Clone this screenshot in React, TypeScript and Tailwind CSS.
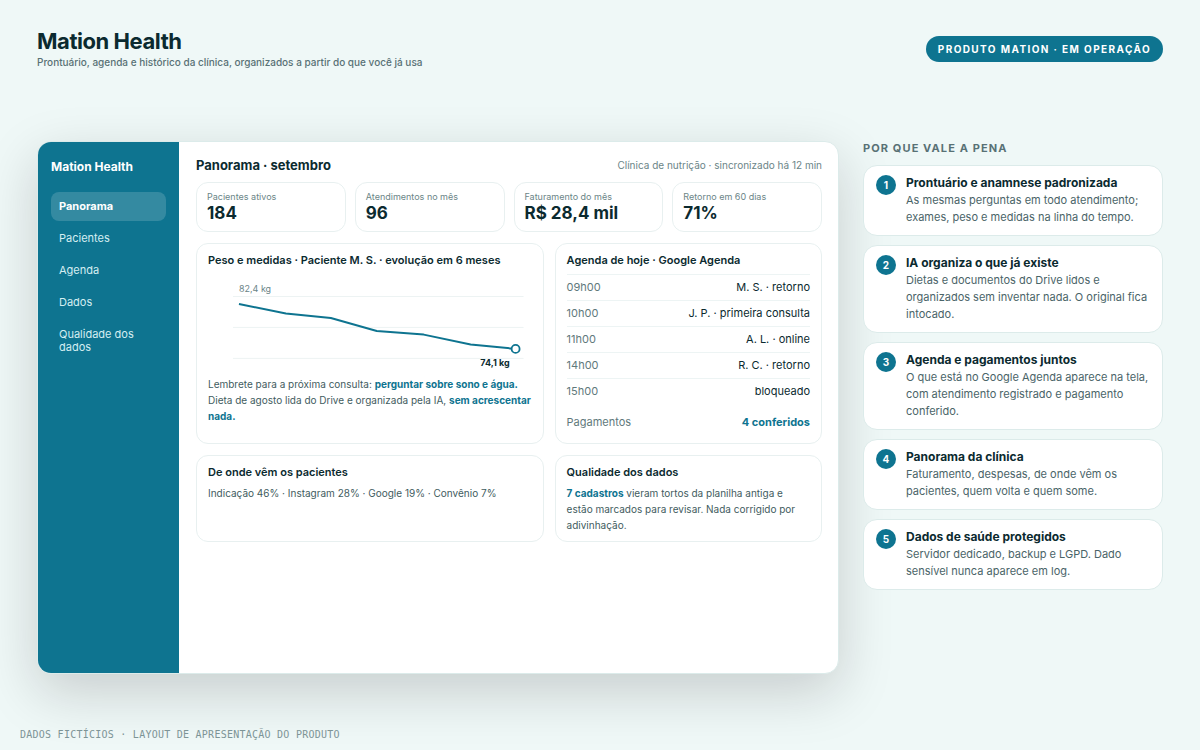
import React from 'react';

const NAV_ITEMS = ['Panorama', 'Pacientes', 'Agenda', 'Dados', 'Qualidade dos dados'];

const STATS = [
    { label: 'Pacientes ativos', value: '184' },
    { label: 'Atendimentos no mês', value: '96' },
    { label: 'Faturamento do mês', value: 'R$ 28,4 mil' },
    { label: 'Retorno em 60 dias', value: '71%' },
];

const AGENDA = [
    { time: '09h00', detail: 'M. S. · retorno' },
    { time: '10h00', detail: 'J. P. · primeira consulta' },
    { time: '11h00', detail: 'A. L. · online' },
    { time: '14h00', detail: 'R. C. · retorno' },
    { time: '15h00', detail: 'bloqueado' },
];

const BENEFITS = [
    { title: 'Prontuário e anamnese padronizada', text: 'As mesmas perguntas em todo atendimento; exames, peso e medidas na linha do tempo.' },
    { title: 'IA organiza o que já existe', text: 'Dietas e documentos do Drive lidos e organizados sem inventar nada. O original fica intocado.' },
    { title: 'Agenda e pagamentos juntos', text: 'O que está no Google Agenda aparece na tela, com atendimento registrado e pagamento conferido.' },
    { title: 'Panorama da clínica', text: 'Faturamento, despesas, de onde vêm os pacientes, quem volta e quem some.' },
    { title: 'Dados de saúde protegidos', text: 'Servidor dedicado, backup e LGPD. Dado sensível nunca aparece em log.' },
];

const Panel: React.FC<{ title: string; children: React.ReactNode }> = ({ title, children }) => (
    <section className="rounded-xl border border-[#e8f0f0] px-[11px] py-2">
        <h3 className="text-[11px] leading-4 font-semibold">{title}</h3>
        {children}
    </section>
);

const WeightChart: React.FC = () => (
    <svg className="mt-1 w-full" viewBox="0 0 324 104" role="img" aria-label="Evolução do peso em 6 meses">
        <g stroke="#edf3f3" strokeWidth="1">
            <path d="M25 24.5H316" />
            <path d="M25 55.5H316" />
            <path d="M25 86.5H316" />
        </g>
        <polyline
            points="31,32 78,41.5 123,46 169,59 216,62.7 263,72.5 308,77"
            fill="none"
            stroke="#0e7490"
            strokeWidth="2"
            strokeLinejoin="round"
        />
        <circle cx="308" cy="77" r="4" fill="#fff" stroke="#0e7490" strokeWidth="1.8" />
        <text x="31" y="20" fontSize="9" fill="#6b8587">82,4 kg</text>
        <text x="302" y="94" fontSize="9" fontWeight="700" fill="#0b2a2f" textAnchor="end">74,1 kg</text>
    </svg>
);

const App: React.FC = () => {
    return (
        <div className="min-h-screen flex flex-col bg-[#eff8f7] text-[#0b2a2f] font-['Inter',sans-serif]">
            <header className="flex items-center justify-between px-[37px] pt-7">
                <div>
                    <h1 className="text-[22px] leading-[26px] font-bold tracking-[-0.02em]">Mation Health</h1>
                    <p className="mt-px text-[10px] leading-[15px] font-medium text-[#587175]">
                        Prontuário, agenda e histórico da clínica, organizados a partir do que você já usa
                    </p>
                </div>
                <span className="rounded-full bg-[#0e7490] px-3 py-[5px] text-[10px] leading-4 font-bold tracking-[0.14em] text-white">
                    PRODUTO MATION · EM OPERAÇÃO
                </span>
            </header>

            <main className="mt-[71px] flex flex-1 gap-6 px-[37px]">
                <div className="flex min-w-0 flex-1 overflow-hidden rounded-[14px] border border-[#dcebea] bg-white shadow-[0_18px_54px_rgba(20,15,20,0.18)]">
                    <aside className="w-[141px] shrink-0 bg-[#0e7490] px-[13px] pt-4 text-white">
                        <div className="text-xs leading-[18px] font-bold">Mation Health</div>
                        <nav className="mt-4 flex flex-col gap-[3px]">
                            {NAV_ITEMS.map((item, i) => (
                                <a
                                    key={item}
                                    href="#"
                                    className={`rounded-lg px-2 py-2 text-[11px] leading-[13px] ${i === 0 ? 'bg-white/16 font-bold' : 'text-[#d5eef2]'}`}
                                >
                                    {item}
                                </a>
                            ))}
                        </nav>
                    </aside>

                    <div className="min-w-0 flex-1 pt-[14px] pr-4 pb-4 pl-[17px]">
                        <div className="flex items-center justify-between">
                            <h2 className="text-[13px] leading-[18px] font-bold">Panorama · setembro</h2>
                            <span className="text-[10px] leading-4 text-[#6b8587]">Clínica de nutrição · sincronizado há 12 min</span>
                        </div>

                        <div className="mt-2 grid grid-cols-4 gap-[9px]">
                            {STATS.map((stat) => (
                                <div key={stat.label} className="rounded-xl border border-[#e8f0f0] px-[10px] py-2">
                                    <div className="text-[9px] leading-3 text-[#6b8587]">{stat.label}</div>
                                    <div className="text-[17px] leading-5 font-bold">{stat.value}</div>
                                </div>
                            ))}
                        </div>

                        <div className="mt-[11px] grid grid-cols-[1.3fr_1fr] gap-[11px]">
                            <Panel title="Peso e medidas · Paciente M. S. · evolução em 6 meses">
                                <WeightChart />
                                <p className="text-[10px] leading-4 text-[#3f5c60]">
                                    Lembrete para a próxima consulta: <b className="text-[#0e7490]">perguntar sobre sono e água.</b> Dieta de
                                    agosto lida do Drive e organizada pela IA, <b className="text-[#0e7490]">sem acrescentar nada.</b>
                                </p>
                            </Panel>

                            <Panel title="Agenda de hoje · Google Agenda">
                                <table className="mt-[6px] w-full text-[11px] leading-[15px]">
                                    <tbody>
                                        {AGENDA.map((row) => (
                                            <tr key={row.time} className="border-t border-[#edf4f4]">
                                                <th scope="row" className="py-[5px] text-left font-normal text-[#5f797c]">{row.time}</th>
                                                <td className="py-[5px] text-right">{row.detail}</td>
                                            </tr>
                                        ))}
                                    </tbody>
                                </table>
                                <div className="mt-[10px] mb-[5px] flex justify-between text-[11px] leading-4">
                                    <span className="text-[#5f797c]">Pagamentos</span>
                                    <b className="text-[#0e7490]">4 conferidos</b>
                                </div>
                            </Panel>

                            <Panel title="De onde vêm os pacientes">
                                <p className="mt-[5px] text-[10px] leading-4 text-[#3f5c60]">
                                    Indicação 46% · Instagram 28% · Google 19% · Convênio 7%
                                </p>
                            </Panel>

                            <Panel title="Qualidade dos dados">
                                <p className="mt-[5px] text-[10px] leading-4 text-[#3f5c60]">
                                    <b className="text-[#0e7490]">7 cadastros</b> vieram tortos da planilha antiga e estão marcados para revisar.
                                    Nada corrigido por adivinhação.
                                </p>
                            </Panel>
                        </div>
                    </div>
                </div>

                <aside className="w-[300px] shrink-0">
                    <h2 className="text-[11px] leading-[14px] font-bold tracking-widest text-[#587175]">POR QUE VALE A PENA</h2>
                    <ol className="mt-[10px] flex flex-col gap-[9px]">
                        {BENEFITS.map((benefit, i) => (
                            <li key={benefit.title} className="flex gap-[10px] rounded-[14px] border border-[#dcebea] bg-white px-3 py-[9px]">
                                <span className="flex size-5 shrink-0 items-center justify-center rounded-full bg-[#0e7490] text-[10px] font-bold text-white">
                                    {i + 1}
                                </span>
                                <div>
                                    <h3 className="mb-[2px] text-xs leading-[15px] font-bold">{benefit.title}</h3>
                                    <p className="text-[11px] leading-[17px] text-[#4a6468]">{benefit.text}</p>
                                </div>
                            </li>
                        ))}
                    </ol>
                </aside>
            </main>

            <footer className="mt-[53px] px-5 pb-[7px] font-['DejaVu_Sans_Mono',monospace] text-[10px] leading-4 tracking-wide text-[#7d9496]">
                DADOS FICTÍCIOS · LAYOUT DE APRESENTAÇÃO DO PRODUTO
            </footer>
        </div>
    );
};

export default App;
